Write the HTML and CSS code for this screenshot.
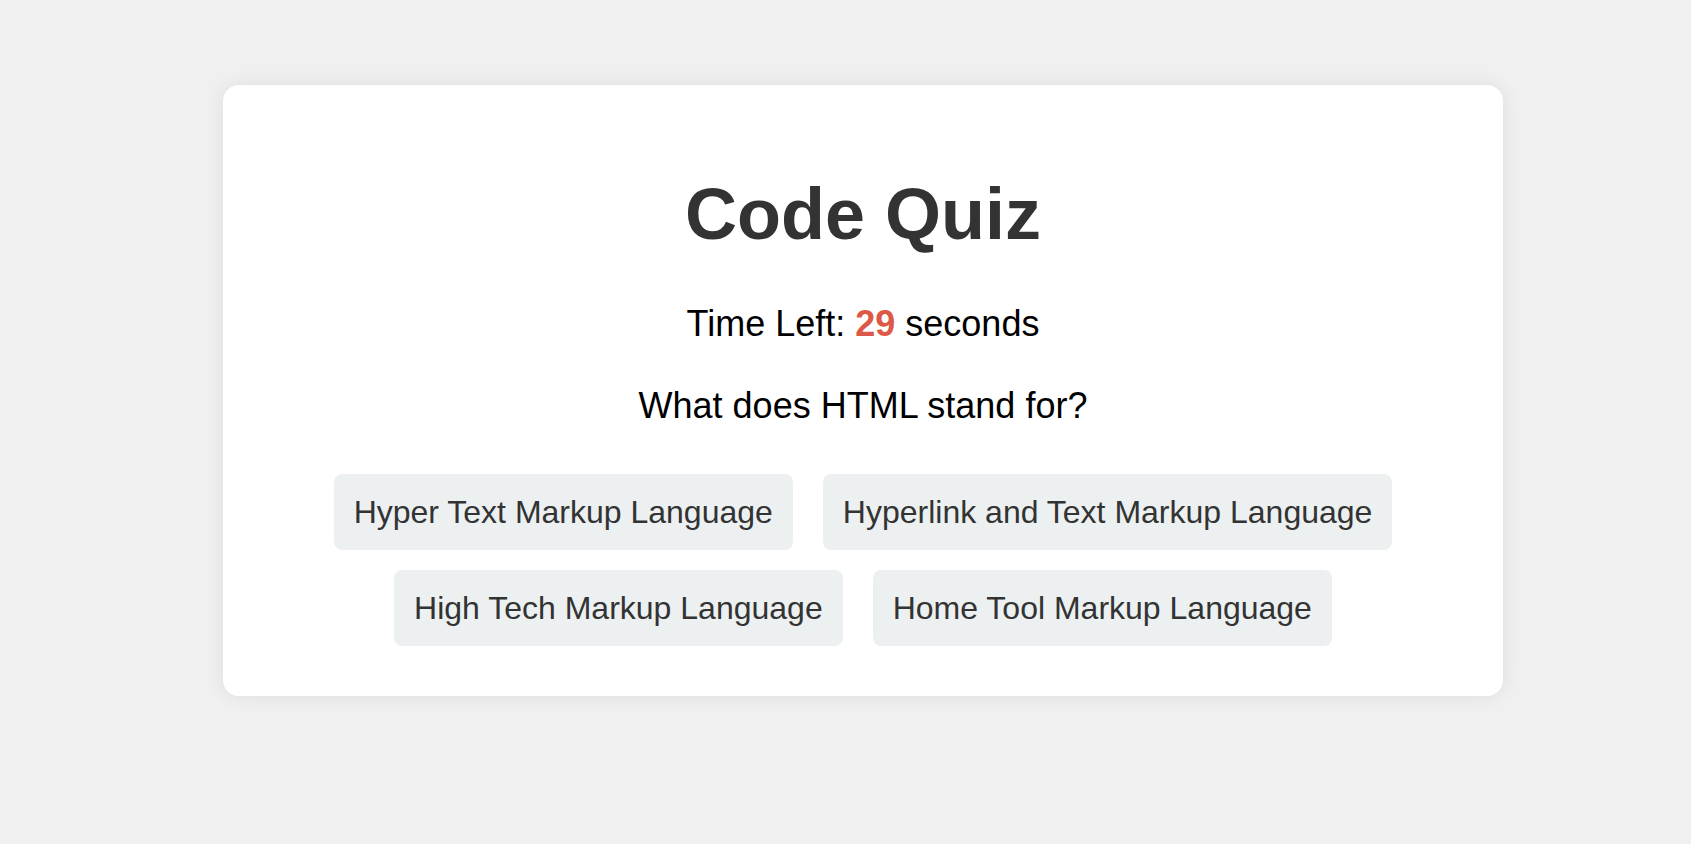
FILE: index.html
```html
<!DOCTYPE html>
<html lang="en">
<head>
<meta charset="utf-8">
<title>Code Quiz</title>
<link rel="stylesheet" href="styles.css">
</head>
<body>
  <main class="card">
    <h1 class="title">Code Quiz</h1>
    <p class="timer">Time Left: <span class="time">29</span> seconds</p>
    <p class="question">What does HTML stand for?</p>
    <div class="options">
      <button class="option">Hyper Text Markup Language</button>
      <button class="option">Hyperlink and Text Markup Language</button>
      <button class="option">High Tech Markup Language</button>
      <button class="option">Home Tool Markup Language</button>
    </div>
  </main>
</body>
</html>
```

FILE: styles.css
```css
html, body {
  margin: 0;
  padding: 0;
}
body {
  background: #f0f0f0;
  font-family: "Liberation Sans", Arial, sans-serif;
  color: #000;
  min-height: 844px;
}
.card {
  box-sizing: border-box;
  width: 1280px;
  margin: 85px 0 0 223px;
  padding: 40px 40px 50px;
  background: #fff;
  border-radius: 16px;
  box-shadow: 0 0 20px rgba(0, 0, 0, 0.08);
  text-align: center;
}
.title {
  margin: 48px 0 48px;
  font-size: 72px;
  font-weight: bold;
  color: #333;
  line-height: normal;
}
.timer {
  margin: 0;
  font-size: 36px;
  line-height: normal;
}
.time {
  color: #dd5947;
  font-weight: bold;
}
.question {
  margin: 40px 0 0;
  font-size: 36px;
  line-height: normal;
}
.options {
  display: flex;
  flex-wrap: wrap;
  justify-content: center;
  column-gap: 30px;
  row-gap: 20px;
  margin-top: 47px;
}
.option {
  font-family: "Liberation Sans", Arial, sans-serif;
  font-size: 32px;
  line-height: 38px;
  color: #333;
  background: #ecf0f1;
  border: none;
  border-radius: 8px;
  padding: 19px 20px;
  cursor: pointer;
}
```
